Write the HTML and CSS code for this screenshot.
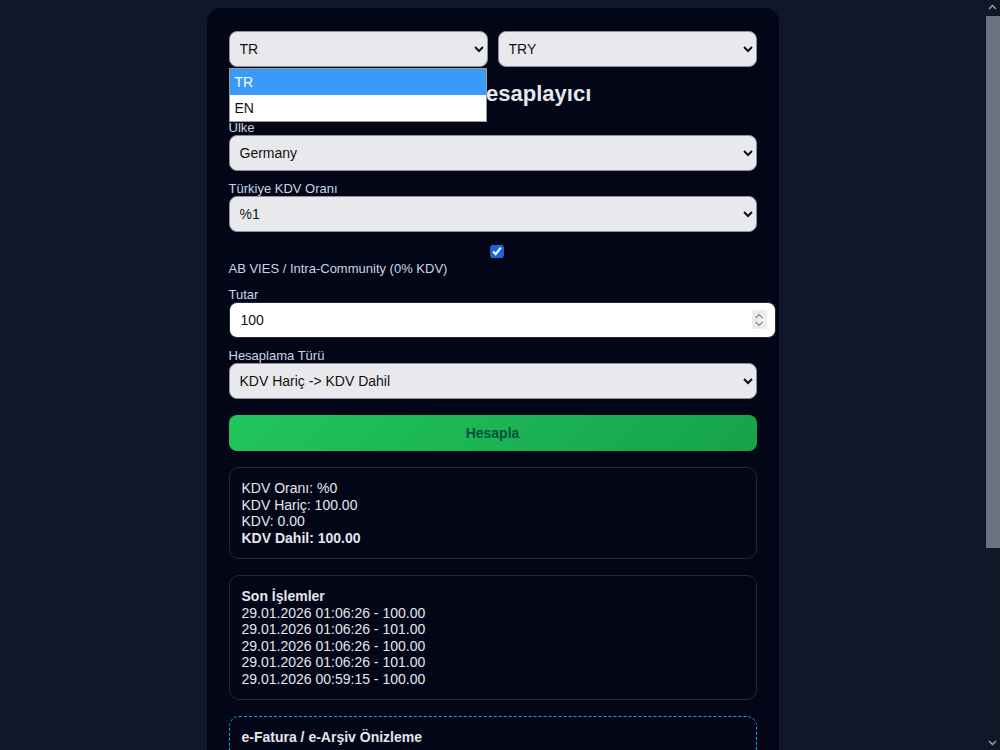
FILE: index.html
```html
<!DOCTYPE html>
<html lang="tr">
<head>
    <meta charset="utf-8">
    <title>AB KDV Hesaplayıcı</title>
    <link rel="stylesheet" href="styles.css">
</head>
<body>
    <div class="card">
        <div class="top-row">
            <div class="lang-wrap">
                <select class="field">
                    <option selected>TR</option>
                    <option>EN</option>
                </select>
                <div class="dropdown">
                    <div class="dropdown-item active">TR</div>
                    <div class="dropdown-item">EN</div>
                </div>
            </div>
            <select class="field">
                <option selected>TRY</option>
                <option>EUR</option>
                <option>USD</option>
            </select>
        </div>

        <h1 class="title">AB KDV Hesaplayıcı</h1>

        <label class="label">Ülke</label>
        <select class="field block">
            <option selected>Germany</option>
            <option>France</option>
            <option>Italy</option>
        </select>

        <label class="label">Türkiye KDV Oranı</label>
        <select class="field block">
            <option selected>%1</option>
            <option>%10</option>
            <option>%20</option>
        </select>

        <label class="check-label">
            <input type="checkbox" class="check" checked>
            AB VIES / Intra-Community (0% KDV)
        </label>

        <label class="label">Tutar</label>
        <div class="amount-wrap">
            <input type="number" class="amount" value="100">
            <span class="spin">
                <svg width="14" height="18" viewBox="0 0 14 18">
                    <path d="M3.5 7 L7 3.5 L10.5 7" fill="none" stroke="#8a8a8f" stroke-width="1.2"/>
                    <path d="M3.5 11 L7 14.5 L10.5 11" fill="none" stroke="#8a8a8f" stroke-width="1.2"/>
                </svg>
            </span>
        </div>

        <label class="label">Hesaplama Türü</label>
        <select class="field block">
            <option selected>KDV Hariç -&gt; KDV Dahil</option>
            <option>KDV Dahil -&gt; KDV Hariç</option>
        </select>

        <button class="calc-btn">Hesapla</button>

        <div class="box">
            <div>KDV Oranı: %0</div>
            <div>KDV Hariç: 100.00</div>
            <div>KDV: 0.00</div>
            <div class="strong">KDV Dahil: 100.00</div>
        </div>

        <div class="box">
            <div class="strong">Son İşlemler</div>
            <div>29.01.2026 01:06:26 - 100.00</div>
            <div>29.01.2026 01:06:26 - 101.00</div>
            <div>29.01.2026 01:06:26 - 100.00</div>
            <div>29.01.2026 01:06:26 - 101.00</div>
            <div>29.01.2026 00:59:15 - 100.00</div>
        </div>

        <div class="box preview">
            <div class="strong">e-Fatura / e-Arşiv Önizleme</div>
            <div class="preview-body">
                <div>Fatura Tipi: e-Arşiv</div>
                <div>Alıcı Ülke: Germany</div>
                <div>Para Birimi: TRY</div>
                <div>Matrah: 100.00</div>
                <div>KDV (%0): 0.00</div>
                <div class="strong">Genel Toplam: 100.00</div>
                <div class="note">Not: 3065 sayılı KDV Kanunu 11/1-a maddesi uyarınca KDV'den istisnadır.</div>
            </div>
        </div>
    </div>

    <!-- page scrollbar, drawn over the right edge -->
    <div class="scrollbar">
        <svg class="sb-arrow top" width="15" height="15" viewBox="0 0 15 15">
            <path d="M4 9 L7.5 5.5 L11 9" fill="none" stroke="#9ca3af" stroke-width="1.4"/>
        </svg>
        <div class="sb-thumb"></div>
        <svg class="sb-arrow bottom" width="15" height="15" viewBox="0 0 15 15">
            <path d="M4 6 L7.5 9.5 L11 6" fill="none" stroke="#9ca3af" stroke-width="1.4"/>
        </svg>
    </div>
</body>
</html>
```

FILE: styles.css
```css
html
{
    background: #0f172a;
}

body
{
    margin: 8px 23px 8px 8px;
    font-family: "Liberation Sans", Arial, sans-serif;
    font-size: 14px;
    color: #e5e7eb;
}

.card
{
    box-sizing: border-box;
    width: 572px;
    margin: 0 auto;
    padding: 23px 22px 23px 22px;
    background: #020617;
    border-radius: 14px;
}

.top-row
{
    display: grid;
    grid-template-columns: 1fr 1fr;
    gap: 10px;
}

.lang-wrap
{
    position: relative;
}

.top-row .field
{
    width: 100%;
    min-width: 0;
}

.field
{
    height: 36px;
    padding: 0 6px;
    font-size: 14px;
    color: #111;
    background: #e9e9ed;
    border: 1px solid #8f8f9d;
    border-radius: 8px;
}

.field.block
{
    display: block;
    width: 100%;
    margin-bottom: 10px;
}

.dropdown
{
    position: absolute;
    top: 37px;
    left: 0;
    width: 258px;
    background: #fff;
    border: 1px solid #9a9a9a;
    box-sizing: border-box;
    z-index: 5;
}

.dropdown-item
{
    height: 26px;
    line-height: 26px;
    padding-left: 5px;
    font-size: 14px;
    color: #111;
}

.dropdown-item.active
{
    background: #3b9af8;
    color: #fff;
}

.title
{
    margin: 14px 0 13px 0;
    padding-right: 14px;
    font-size: 22px;
    line-height: 26px;
    text-align: center;
    color: #e5e7eb;
}

.label
{
    display: block;
    font-size: 13px;
    line-height: 15px;
    color: #cbd5e1;
}

.check-label
{
    display: block;
    margin-top: 13px;
    margin-bottom: 11px;
    font-size: 13px;
    line-height: 15px;
    color: #cbd5e1;
}

.check
{
    display: block;
    width: 100%;
    height: 13px;
    margin: 3px 3px 3px 4px;
    accent-color: #1a66e0;
}

.amount-wrap
{
    position: relative;
    margin-bottom: 10px;
}

.amount
{
    display: block;
    box-sizing: border-box;
    width: calc(100% + 19px);
    height: 36px;
    padding: 0 8px 0 11px;
    font-family: "Liberation Sans", Arial, sans-serif;
    font-size: 14px;
    color: #111;
    background: #fff;
    border: 1px solid #1e293b;
    border-radius: 8px;
}

.amount::-webkit-inner-spin-button
{
    -webkit-appearance: none;
}

.spin
{
    position: absolute;
    top: 8px;
    right: -10px;
    width: 15px;
    height: 19px;
    background: #ececef;
    display: flex;
    align-items: center;
    justify-content: center;
}

.calc-btn
{
    display: block;
    width: 100%;
    height: 36px;
    margin-top: 16px;
    font-family: "Liberation Sans", Arial, sans-serif;
    font-size: 14px;
    font-weight: bold;
    color: #064e3b;
    background: linear-gradient(135deg, #22c55e, #16a34a);
    border: none;
    border-radius: 8px;
}

.box
{
    margin-top: 16px;
    padding: 12px;
    border: 1px solid #1e293b;
    border-radius: 10px;
    line-height: 16.5px;
}

.strong
{
    font-weight: bold;
}

.preview
{
    border: 1px dashed #0ea5e9;
    height: 244px;
}

.preview-body
{
    margin-top: 10px;
    color: #cbd5e1;
}

.note
{
    margin-top: 10px;
    font-size: 12px;
    color: #94a3b8;
}

.scrollbar
{
    position: fixed;
    top: 0;
    right: 0;
    width: 15px;
    height: 100%;
    background: #111726;
}

.sb-arrow
{
    position: absolute;
    left: 0;
}

.sb-arrow.top
{
    top: 0;
}

.sb-arrow.bottom
{
    bottom: 0;
}

.sb-thumb
{
    position: absolute;
    top: 16px;
    left: 1px;
    width: 14px;
    height: 532px;
    background: #6b7280;
}
```
